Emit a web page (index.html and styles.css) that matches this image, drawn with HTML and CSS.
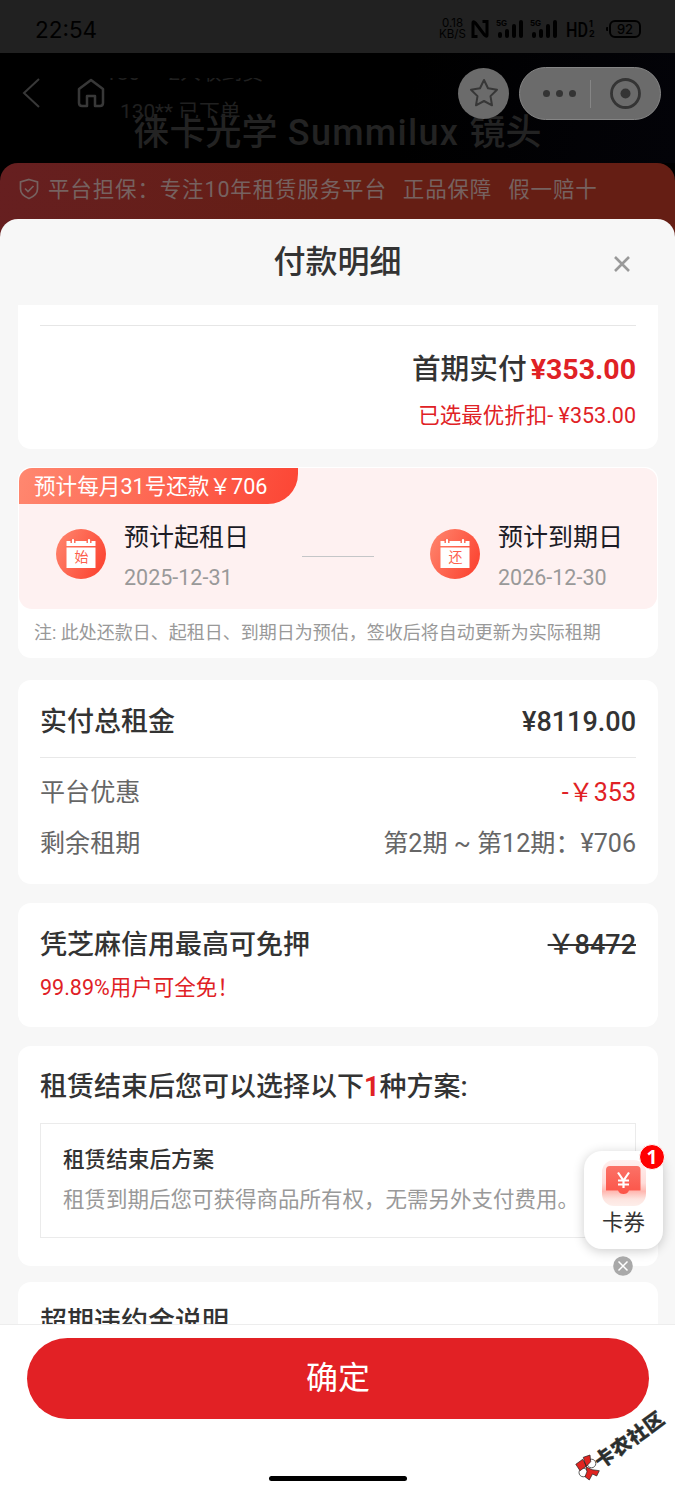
FILE: index.html
```html
<!DOCTYPE html>
<html lang="zh-CN">
<head>
<meta charset="utf-8">
<title>付款明细</title>
<link rel="stylesheet" href="styles.css">
</head>
<body>
<div class="screen">
  <div class="status">
    <span class="time">22:54</span>
    <div class="status-right">
      <span class="speed">0.18<br>KB/S</span>
      <svg class="nfc" width="18" height="20" viewBox="0 0 18 20"><path d="M6.500 17.500H2V4Q2 1.500 4.500 4L13.500 16Q16 18.500 16 16V2.500h-4.500" /></svg>
      <svg class="signal" width="27" height="20" viewBox="0 0 27 20"><path d="M4 17v-2M11 17v-5M18 17V7M25 17V3"/><text x="0" y="7">5G</text></svg>
      <svg class="signal" width="27" height="20" viewBox="0 0 27 20"><path d="M4 17v-2M11 17v-5M18 17V7M25 17V3"/><text x="0" y="7">5G</text></svg>
      <svg class="hd" width="22" height="20" viewBox="0 0 22 20"><text x="0" y="17.500" textLength="22" lengthAdjust="spacingAndGlyphs">HD</text></svg><span class="hd-sub">1<br>2</span>
      <i class="nub"></i><span class="battery">92</span>
    </div>
  </div>
  <div class="hero">
    <div class="nav">
      <svg class="back" width="18" height="30" viewBox="0 0 18 30"><path d="M17 1 2 15l15 14"/></svg>
      <svg class="home" width="28" height="30" viewBox="0 0 28 30"><path d="M2 11 14 2l12 9v14q0 3-3 3h-5V18h-8v10H5q-3 0-3-3z"/></svg>
      <div class="orders"><div class="order-a">180** &nbsp;2人收到货</div><div class="order-b">130** 已下单</div></div>
      <div class="star"><svg width="30" height="30" viewBox="0 0 30 30"><path d="m15 2 4 8.300 9 1.400-6.500 6.400 1.500 9.200-8-4.300-8 4.300 1.500-9.200L2 11.700l9-1.400z"/></svg></div>
      <div class="capsule"><svg width="142" height="53" viewBox="0 0 142 53"><g fill="#343434"><circle cx="26.500" cy="25.500" r="3.500"/><circle cx="39.500" cy="25.500" r="3.500"/><circle cx="52.500" cy="25.500" r="3.500"/><circle cx="105.500" cy="25.500" r="5"/></g><circle cx="105.500" cy="25.500" r="14" fill="none" stroke="#343434" stroke-width="2.800"/><path d="M70.500 12v28" stroke="#858585"/></svg></div>
    </div>
    <div class="product">徕卡光学<span> Summilux </span>镜头</div>
  </div>
  <div class="guarantee">
    <svg width="20" height="22" viewBox="0 0 20 22"><path d="M10 1.500 18.500 4v7q0 6-8.500 9.500Q1.500 17 1.500 11V4zM6 10.500l3 3 5.500-5.500"/></svg>
    <span class="g1">平台担保：专注10年租赁服务平台</span><span class="g2">正品保障</span><span>假一赔十</span>
  </div>

  <section class="sheet">
    <header class="sheet-head"><h1>付款明细</h1><svg class="close" width="18" height="18" viewBox="0 0 18 18"><path d="m2 2 14 14M16 2 2 16"/></svg></header>
    <main class="content">
      <div class="card first">
        <div class="pay">首期实付<b>¥353.00</b></div>
        <div class="discount">已选最优折扣- ¥353.00</div>
      </div>
      <div class="card dates">
        <div class="period">
          <div class="tag">预计每月31号还款￥706</div>
          <div class="range">
            <svg class="cal" width="50" height="50" viewBox="0 0 50 50"><defs><linearGradient id="g" x1="0" y1="0" x2="1" y2=".5"><stop stop-color="#ff8870"/><stop offset="1" stop-color="#fc4936"/></linearGradient></defs><circle cx="25" cy="25" r="25" fill="url(#g)"/><path d="M10.500 17v-5h29v5zM10.500 18.500h29V39h-29z" fill="#fff"/><path d="M17 10v4M33 10v4" stroke="#fd634d" stroke-width="5"/><path d="M17 11v3M33 11v3" stroke="#fff" stroke-width="2.200" stroke-linecap="round"/><text x="25.500" y="33">始</text></svg>
            <div class="date"><p>预计起租日</p><time>2025-12-31</time></div>
            <i class="dash"></i>
            <svg class="cal" width="50" height="50" viewBox="0 0 50 50"><circle cx="25" cy="25" r="25" fill="url(#g)"/><path d="M10.500 17v-5h29v5zM10.500 18.500h29V39h-29z" fill="#fff"/><path d="M17 10v4M33 10v4" stroke="#fd634d" stroke-width="5"/><path d="M17 11v3M33 11v3" stroke="#fff" stroke-width="2.200" stroke-linecap="round"/><text x="25.500" y="33">还</text></svg>
            <div class="date"><p>预计到期日</p><time>2026-12-30</time></div>
          </div>
        </div>
        <div class="note">注: 此处还款日、起租日、到期日为预估，签收后将自动更新为实际租期</div>
      </div>
      <div class="card total">
        <div class="row head"><span>实付总租金</span><span>¥8119.00</span></div>
        <div class="row"><span>平台优惠</span><span class="red">-￥353</span></div>
        <div class="row"><span>剩余租期</span><span>第2期 ~ 第12期：¥706</span></div>
      </div>
      <div class="card deposit">
        <div class="row strong"><span>凭芝麻信用最高可免押</span><s>￥8472</s></div>
        <div class="free">99.89%用户可全免！</div>
      </div>
      <div class="card plans">
        <h2>租赁结束后您可以选择以下<em>1</em>种方案:</h2>
        <div class="plan"><h3>租赁结束后方案</h3><p>租赁到期后您可获得商品所有权，无需另外支付费用。</p></div>
      </div>
      <div class="card overdue"><h2>超期违约金说明</h2></div>
    </main>
    <footer class="footer">
      <button class="confirm">确定</button>
      <div class="home-bar"></div>
    </footer>
  </section>

  <aside class="coupon">
    <svg width="46" height="46" viewBox="0 0 46 46"><defs><linearGradient id="c" x1="0" y1="0" x2="0" y2="1"><stop stop-color="#fff0ef"/><stop offset=".5" stop-color="#ffdcd9"/><stop offset=".68" stop-color="#ffb8b1"/><stop offset=".85" stop-color="#fde4df"/><stop offset="1" stop-color="#fdeeea"/></linearGradient><linearGradient id="t" x1="0" y1="0" x2="0" y2="1"><stop stop-color="#fb7267"/><stop offset="1" stop-color="#fc5448"/></linearGradient></defs><rect x="1" y="0" width="44" height="46" rx="12" fill="url(#c)"/><path d="M9 6h27q3.500 0 3.500 3.500V30.500H28q-1.500 3.500-5.500 3.500t-5.500-3.500H5V10q0-4 4-4z" fill="url(#t)"/><path d="m17 12.500 5.500 8L28 12.500M22.500 20.500V28M17 20.500h11M17 24.500h11" fill="none" stroke="#fff" stroke-width="2.200"/></svg>
    <span>卡券</span>
    <b class="badge">1</b>
  </aside>
  <svg class="coupon-close" width="20" height="20" viewBox="0 0 20 20"><circle cx="10" cy="10" r="9.800" fill="#a9a9a9"/><path d="m5.500 5.500 9 9m0-9-9 9" stroke="#fff" stroke-width="1.500"/></svg>
  <svg class="mark-logo" width="26" height="30" viewBox="0 0 26 30"><g fill="#fff" stroke="#333" stroke-width=".8"><circle cx="16.500" cy="11.500" r="4.300"/><circle cx="8.300" cy="20.500" r="4.300"/></g><path d="M.8 12.300 7.700 7.300 11.500 14 5 18.700zM8.300 5.300 15 3l.7 6.700L11 14.700zM11 14.700l6 3 7.300 1L21.700 24l-4.200-2-3.200 6-4.300-3.300 2-5z" fill="#e02420" stroke="#222" stroke-width=".7"/></svg>
  <div class="mark-text">卡农社区</div>
</div>
</body>
</html>
```
FILE: styles.css
```css
* { box-sizing: border-box; }
body, h1, h2, h3, p { margin: 0; }
body { font-family: Roboto, "Noto Sans CJK SC", sans-serif; color: #333; }
svg { display: block; flex: none; }
.screen { position: relative; width: 675px; height: 1500px; overflow: hidden; background: #000; display: flex; flex-direction: column; }

.status { height: 53px; flex: none; background: #212121; color: #000; display: flex; justify-content: space-between; align-items: center; padding: 5px 34px 0 35px; font-family: Inter, sans-serif; }
.time { font-size: 22.500px; font-weight: 400; }
.status-right { display: flex; align-items: center; }
.speed { font-size: 11.500px; line-height: 11px; text-align: center; width: 27px; font-weight: 400; }
.nfc { margin-left: 5px; fill: none; stroke: #000; stroke-width: 3; }
.signal { margin-left: 7px; stroke: #000; stroke-width: 4; stroke-linecap: round; }
.signal text { font: 700 8px Inter, sans-serif; stroke: none; }
.hd { margin-left: 9px; font: 500 21px Roboto, sans-serif; overflow: visible; }
.hd-sub { font-size: 9px; line-height: 10px; font-weight: 700; width: 6px; margin-left: 1px; }
.nub { width: 2px; height: 4px; background: #000; margin: 0 1px 0 11px; border-radius: 1px 0 0 1px; }
.battery { width: 32px; height: 18px; border: 2px solid #000; border-radius: 6px; font-size: 13px; line-height: 14px; text-align: center; font-weight: 500; }

.hero { height: 110px; flex: none; background: linear-gradient(100deg, #000 60%, #030308); }
.nav { height: 80px; display: flex; align-items: center; padding-left: 22px; position: relative; }
.back { fill: none; stroke: #383838; stroke-width: 2; }
.home { margin-left: 37px; fill: none; stroke: #383838; stroke-width: 2.500; stroke-linejoin: round; }
.orders { width: 353px; height: 40px; margin-top: 10px; overflow: hidden; color: #202020; font-size: 20.800px; line-height: 39px; flex: none; }
.order-a { margin-top: -24px; }
.order-b { padding-left: 15px; }
.star { width: 51px; height: 51px; flex: none; border-radius: 50%; background: #6b6b6b; display: grid; place-items: center; }
.star svg { fill: none; stroke: #373737; stroke-width: 2; stroke-linejoin: round; }
.capsule { width: 142px; height: 53px; flex: none; margin-left: 10px; border: 1px solid #858585; border-radius: 27px; background: #6b6b6b; }
.product { height: 30px; line-height: 30px; margin-top: -15px; text-align: center; font-size: 36px; font-weight: 500; color: #232323; white-space: pre; }
.product span { letter-spacing: 1.300px; }

.guarantee { height: 86px; flex: none; border-radius: 18px 18px 0 0; background: linear-gradient(100deg, #661f20, #651e14 50%, #651e14); color: #766260; padding: 0 19px; display: flex; align-items: flex-start; line-height: 54px; font-size: 21.500px; letter-spacing: .850px; }
.guarantee svg { margin: 15px 9px 0 0; fill: none; stroke: #766260; stroke-width: 1.700; }
.g1, .g2 { margin-right: 16px; }

.sheet { flex: none; height: 1281px; margin-top: -30px; background: #f7f7f7; border-radius: 18px 18px 0 0; overflow: hidden; }
.sheet-head { height: 86px; display: grid; grid-template-columns: 1fr auto 1fr; align-items: center; }
.sheet-head h1 { grid-column: 2; font-size: 32px; line-height: 40px; font-weight: 500; }
.close { justify-self: end; margin: 4px 44px 0 0; fill: none; stroke: #999; stroke-width: 2.600; }
.content { height: 1019px; overflow: hidden; padding: 0 17px 0 18px; }
.card { background: #fff; border-radius: 13px; padding: 0 22px; }
.first { height: 144px; border-radius: 0 0 13px 13px; padding-top: 20px; text-align: right; }
.pay { border-top: 1px solid #e6e6e6; padding-top: 22px; font-size: 28.700px; line-height: 42px; font-weight: 500; }
.pay b { color: #e02125; font-size: 28.500px; font-weight: 700; margin-left: 4px; }
.discount { color: #e02125; font-size: 21.500px; line-height: 30px; margin-top: 10px; }
.dates { height: 191px; margin-top: 18px; padding: 1px; }
.period { height: 141px; border-radius: 13px; background: #fef1f1; overflow: hidden; }
.tag { width: 279px; height: 36px; border-radius: 0 0 30px 0; padding-left: 15px; color: #fff; font-size: 21.600px; line-height: 38px; background: linear-gradient(110deg, #ff8870, #fc4534); }
.range { display: flex; align-items: flex-start; padding: 15px 0 0 37px; }
.cal { margin-top: 10px; }
.cal text { font: 14px "Noto Sans CJK SC", sans-serif; fill: #fd5f4c; text-anchor: middle; }
.date { margin-left: 18px; width: 125px; }
.date p { color: #1b1b25; font-size: 25px; line-height: 38px; white-space: nowrap; }
.date time { display: block; color: #999; font-size: 21.500px; line-height: 30px; margin-top: 6px; }
.dash { width: 72px; height: 1px; background: #c4c6c8; margin: 37px 56px 0 53px; }
.note { padding-left: 15px; color: #999; font-size: 18px; line-height: 48px; }
.total { height: 204px; margin-top: 22px; }
.row { display: flex; justify-content: space-between; font-size: 25.100px; line-height: 51px; color: #666; }
.row.head { height: 78px; line-height: 84px; margin-bottom: 9px; border-bottom: 1px solid #e8e8e8; color: #333; font-size: 27px; font-weight: 500; }
.row .red { color: #e02125; }
.deposit { height: 124px; margin-top: 19px; padding-top: 21px; }
.row.strong { color: #333; font-size: 27px; line-height: 42px; font-weight: 500; }
.free { color: #e02125; font-size: 21.500px; line-height: 30px; margin-top: 7px; }
.plans { height: 220px; margin-top: 19px; padding-top: 19px; }
h2 { font-size: 27px; line-height: 44px; font-weight: 500; }
h2 em { color: #e02125; font-style: normal; font-weight: 700; }
.plan { height: 115px; margin-top: 14px; padding: 20px 22px; border: 1px solid #ebebeb; }
h3 { font-size: 21.600px; line-height: 32px; font-weight: 500; }
.plan p { font-size: 21.500px; line-height: 34px; margin-top: 7px; color: #999; white-space: nowrap; }
.overdue { height: 120px; margin-top: 16px; padding-top: 18px; }
.footer { height: 176px; background: #fff; border-top: 1px solid #ededed; padding: 13px 26px 0 27px; display: flex; flex-direction: column; align-items: center; }
.confirm { width: 100%; height: 81px; border: 0; border-radius: 41px; background: #e22125; color: #fff; padding: 0 0 7px; font: 400 32px Roboto, "Noto Sans CJK SC", sans-serif; }
.home-bar { width: 138px; height: 5px; border-radius: 3px; background: #000; margin-top: 57px; }

.coupon { position: absolute; left: 584px; top: 1151px; width: 79px; height: 98px; background: #fff; border-radius: 18px; box-shadow: 0 2px 12px #0003; display: flex; flex-direction: column; align-items: center; padding-top: 9px; font-size: 21.500px; line-height: 34px; }
.badge { position: absolute; left: 55px; top: -7px; width: 26px; height: 26px; border: 1px solid #fff; border-radius: 50%; background: #f00; color: #fff; font: 700 19px/25px "Open Sans", sans-serif; text-align: center; }
.coupon-close { position: absolute; left: 613px; top: 1256px; }
.mark-logo { position: absolute; left: 575px; top: 1452px; }
.mark-text { position: absolute; left: 587px; top: 1426px; width: 84px; text-align: center; transform: rotate(-36deg); font: 900 19.500px/26px "Noto Sans CJK SC", sans-serif; letter-spacing: .8px; white-space: nowrap; color: #2c2f2e; -webkit-text-stroke: .3px #2c2f2e; }
```
